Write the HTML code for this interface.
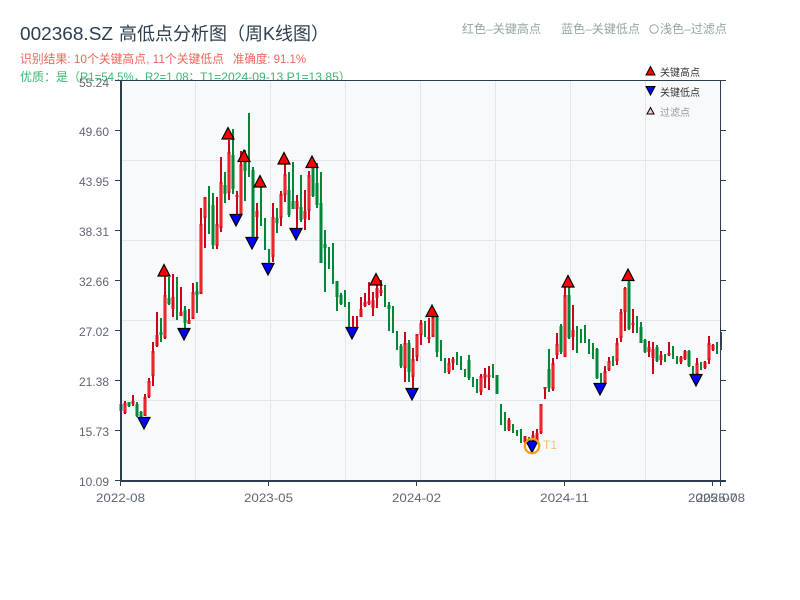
<!DOCTYPE html>
<html><head><meta charset="utf-8"><style>
html,body{margin:0;padding:0;background:#fff;width:800px;height:600px;overflow:hidden}
svg{display:block}
text{font-family:"Liberation Sans","WenQuanYi Zen Hei","Noto Sans CJK SC",sans-serif}
</style></head><body>
<svg width="800" height="600" viewBox="0 0 800 600" xmlns="http://www.w3.org/2000/svg">
<rect width="800" height="600" fill="#fff"/>
<text x="20" y="40" font-size="18" fill="#2c3e50" textLength="93" lengthAdjust="spacingAndGlyphs">002368.SZ</text>
<text x="119" y="40" font-size="18" fill="#2c3e50">高低点分析图（周K线图）</text>
<g font-size="12" fill="#e74c3c" fill-opacity=".85">
<text x="20" y="63" textLength="204" lengthAdjust="spacingAndGlyphs">识别结果: 10个关键高点, 11个关键低点</text>
<text x="233" y="63" textLength="73" lengthAdjust="spacingAndGlyphs">准确度: 91.1%</text>
</g>
<g font-size="12" fill="#27ae60" fill-opacity=".9">
<text x="20" y="81">优质：是（</text>
<text x="80" y="81" textLength="65" lengthAdjust="spacingAndGlyphs">R1=54.5%，</text>
<text x="145" y="81" textLength="55" lengthAdjust="spacingAndGlyphs">R2=1.08；</text>
<text x="200" y="81" textLength="151" lengthAdjust="spacingAndGlyphs">T1=2024-09-13 P1=13.85）</text>
</g>
<text x="462" y="33" font-size="12" fill="#95a5a6" textLength="79" lengthAdjust="spacingAndGlyphs">红色–关键高点</text>
<text x="561" y="33" font-size="12" fill="#95a5a6" textLength="79" lengthAdjust="spacingAndGlyphs">蓝色–关键低点</text>
<circle cx="654" cy="29" r="4.2" fill="none" stroke="#95a5a6"/>
<text x="660" y="33" font-size="12" fill="#95a5a6" textLength="67" lengthAdjust="spacingAndGlyphs">浅色–过滤点</text>

<rect x="121" y="81" width="599" height="399" fill="#f8f9fa"/>
<path d="M195.5 81V480M270.5 81V480M345.5 81V480M420.5 81V480M495.5 81V480M570.5 81V480M645.5 81V480M121 160.5H720M121 240.5H720M121 320.5H720M121 400.5H720" stroke="#e3e5ea" fill="none"/>

<g shape-rendering="crispEdges" fill="none">
<path stroke="#00883a" stroke-width="2" d="M121 403V411M129 402V407M137 402V417M141 411V417M161 318V342M169 277V305M177 277V320M185 306V329M197 282V313M209 186V234M213 193V249M225 172V203M233 129V194M245 150V201M249 113V177M253 167V238M261 187V226M265 218V250M269 249V267M277 208V233M289 172V217M293 162V209M301 175V222M313 165V197M317 163V208M321 172V263M325 230V292M329 247V269M333 243V284M337 281V311M341 293V305M345 290V307M349 302V328M385 285V307M389 302V331M393 306V333M397 331V350M401 344V368M409 340V382M425 321V337M437 317V357M441 340V361M445 358V373M457 352V365M461 356V370M465 369V377M469 355V380M473 377V387M477 379V393M493 364V378M497 375V394M501 404V425M505 412V431M513 424V433M517 430V436M521 429V443M529 437V446M549 349V392M561 324V354M569 287V339M577 326V353M581 329V343M585 325V343M589 339V354M593 343V359M597 348V379M601 373V385M613 356V366M629 280V330M637 316V333M641 322V343M645 339V353M657 345V362M665 354V362M673 346V359M677 356V364M689 350V367M693 366V375M701 362V370M717 342V354"/>
<path stroke="#00883a" stroke-width="3" d="M121 404V411M129 402V406M137 404V416M141 412V417M161 332V335M169 298V304M185 310V323M197 291V295M213 205V245M225 185V194M233 155V189M245 162V171M253 170V238M277 218V223M289 190V215M293 201V209M301 207V220M313 167V196M317 183V205M321 203V263M325 244V248M337 281V297M341 295V304M389 305V309M401 346V366M409 343V372M437 317V352M469 360V378M497 375V394M549 369V388M561 326V352M569 295V338M597 349V378M629 282V329M641 327V343M645 340V352M657 347V361M689 351V366"/>
<path stroke="#d0021b" stroke-width="2" d="M125 401V414M133 395V406M145 394V416M149 378V398M153 342V386M157 312V347M165 275V339M173 274V317M181 287V316M189 309V324M193 283V319M201 208V294M205 197V248M217 197V249M221 157V232M229 140V200M237 191V215M241 151V215M257 203V238M273 203V262M281 191V226M285 163V202M297 195V228M305 190V230M309 171V220M353 316V335M357 316V328M361 297V317M365 293V307M369 282V305M373 292V316M377 283V308M381 280V296M405 332V382M413 348V390M417 334V361M421 320V345M429 318V343M433 317V337M449 358V374M453 357V370M481 374V395M485 368V388M489 366V390M509 418V431M525 436V443M533 431V441M537 429V441M541 404V434M545 387V399M553 358V391M557 333V359M565 287V357M573 305V350M605 366V383M609 357V371M617 338V365M621 309V342M625 287V331M633 309V333M649 341V357M653 342V374M661 351V365M669 342V356M681 356V364M685 350V360M697 358V375M705 361V369M709 336V364M713 344V351M721 332V350"/>
<path stroke="#d8101f" stroke-width="3" d="M125 403V413M133 401V404M145 397V416M149 381V397M153 351V376M157 335V346M165 295V338M173 297V309M181 312V316M189 320V324M193 292V319M201 224V294M205 197V218M217 224V246M221 182V228M229 152V193M237 195V197M241 164V215M257 211V217M273 217V257M281 194V218M285 174V195M297 201V209M305 211V219M309 175V211M361 309V317M365 302V306M369 301V304M373 300V308M377 288V298M381 290V293M405 343V368M413 359V377M417 334V357M421 323V335M429 337V339M433 317V337M449 363V372M453 359V363M481 376V392M485 374V378M489 375V377M509 420V430M525 436V442M533 435V440M537 433V440M541 404V433M545 387V389M553 363V389M557 344V355M565 295V357M573 330V337M605 371V383M609 361V370M617 343V361M621 312V338M625 288V312M633 323V325M649 347V352M653 349V358M661 355V360M669 353V355M681 357V362M685 351V359M697 363V375M705 362V368M709 343V360M713 345V350"/>
<path stroke="#ff3b3b" stroke-width="1" d="M125 405V411M145 399V414M149 383V395M153 353V374M165 297V336M193 294V317M201 226V292M205 199V216M217 226V244M221 184V226M229 154V191M241 166V213M273 219V255M281 196V216M285 176V193M309 177V209M405 345V366M413 361V375M417 336V355M421 325V333M433 319V335M449 365V370M481 378V390M541 406V431M553 365V387M557 346V353M565 297V355M605 373V381M609 363V368M617 345V359M621 314V336M625 290V310M697 365V373M709 345V358"/>
</g>

<g stroke="#000" stroke-width="1.2" fill="#f00">
<path d="M164 264.500L170 276H158Z"/><path d="M228 127.500L234 139H222Z"/><path d="M244 150L250 161.500H238Z"/><path d="M260 175.500L266 187H254Z"/><path d="M284 152.500L290 164H278Z"/><path d="M312 156L318 167.500H306Z"/><path d="M376 273.500L382 285H370Z"/><path d="M432 305L438 316.500H426Z"/><path d="M568 275.500L574 287H562Z"/><path d="M628 269L634 280.500H622Z"/>
</g>
<g stroke="#000" stroke-width="1.2" fill="#00f">
<path d="M138 417.500H150L144 429Z"/><path d="M178 328.500H190L184 340Z"/><path d="M230 214.500H242L236 226Z"/><path d="M246 237.500H258L252 249Z"/><path d="M262 263.500H274L268 275Z"/><path d="M290 228.500H302L296 240Z"/><path d="M346 327.500H358L352 339Z"/><path d="M406 388.500H418L412 400Z"/><path d="M526 441H538L532 452.500Z"/><path d="M594 383.500H606L600 395Z"/><path d="M690 374.500H702L696 386Z"/>
</g>
<circle cx="532" cy="446" r="7.200" fill="none" stroke="#f39c12" stroke-width="2.200"/>
<text x="543" y="449" font-size="12" fill="#f5a623" fill-opacity=".7">T1</text>

<g shape-rendering="crispEdges">
<path d="M121 80V482" stroke="#2c3e50" stroke-width="2"/>
<path d="M120 481H726" stroke="#2c3e50" stroke-width="2"/>
<path d="M120 80.500H726M720.500 80V486" stroke="#2c3e50" stroke-width="1" fill="none"/>
<path d="M115 80.500H120M115 130.500H120M115 180.500H120M115 230.500H120M115 280.500H120M115 330.500H120M115 380.500H120M115 430.500H120M115 480.500H120M721 130.500H726M721 180.500H726M721 230.500H726M721 280.500H726M721 330.500H726M721 380.500H726M721 430.500H726M120.500 482V486M268.500 482V486M416.500 482V486M564.500 482V486M712.500 482V486" stroke="#2c3e50" stroke-width="1"/>
</g>

<g font-size="12" fill="#5f6673">
<text x="79" y="87" textLength="30" lengthAdjust="spacingAndGlyphs">55.24</text><text x="79" y="136" textLength="30" lengthAdjust="spacingAndGlyphs">49.60</text><text x="79" y="186" textLength="30" lengthAdjust="spacingAndGlyphs">43.95</text><text x="79" y="236" textLength="30" lengthAdjust="spacingAndGlyphs">38.31</text><text x="79" y="286" textLength="30" lengthAdjust="spacingAndGlyphs">32.66</text><text x="79" y="336" textLength="30" lengthAdjust="spacingAndGlyphs">27.02</text><text x="79" y="386" textLength="30" lengthAdjust="spacingAndGlyphs">21.38</text><text x="79" y="436" textLength="30" lengthAdjust="spacingAndGlyphs">15.73</text><text x="79" y="486" textLength="30" lengthAdjust="spacingAndGlyphs">10.09</text>
</g>
<g font-size="12" fill="#5f6673">
<text x="96" y="502" textLength="49" lengthAdjust="spacingAndGlyphs">2022-08</text><text x="244" y="502" textLength="49" lengthAdjust="spacingAndGlyphs">2023-05</text><text x="392" y="502" textLength="49" lengthAdjust="spacingAndGlyphs">2024-02</text><text x="540" y="502" textLength="49" lengthAdjust="spacingAndGlyphs">2024-11</text><text x="688" y="502" textLength="49" lengthAdjust="spacingAndGlyphs">2025-07</text><text x="696" y="502" textLength="49" lengthAdjust="spacingAndGlyphs">2025-08</text>
</g>

<path d="M650.500 66.500L655 75H646Z" fill="#f00" stroke="#000"/>
<text x="660" y="76" font-size="10" fill="#333">关键高点</text>
<path d="M646 86.500H655L650.500 95Z" fill="#00f" stroke="#000"/>
<text x="660" y="96" font-size="10" fill="#333">关键低点</text>
<path d="M650.500 107.500L654 114H647Z" fill="#ffc8c8" stroke="#000"/>
<text x="660" y="116" font-size="10" fill="#999">过滤点</text>
</svg>
</body></html>
